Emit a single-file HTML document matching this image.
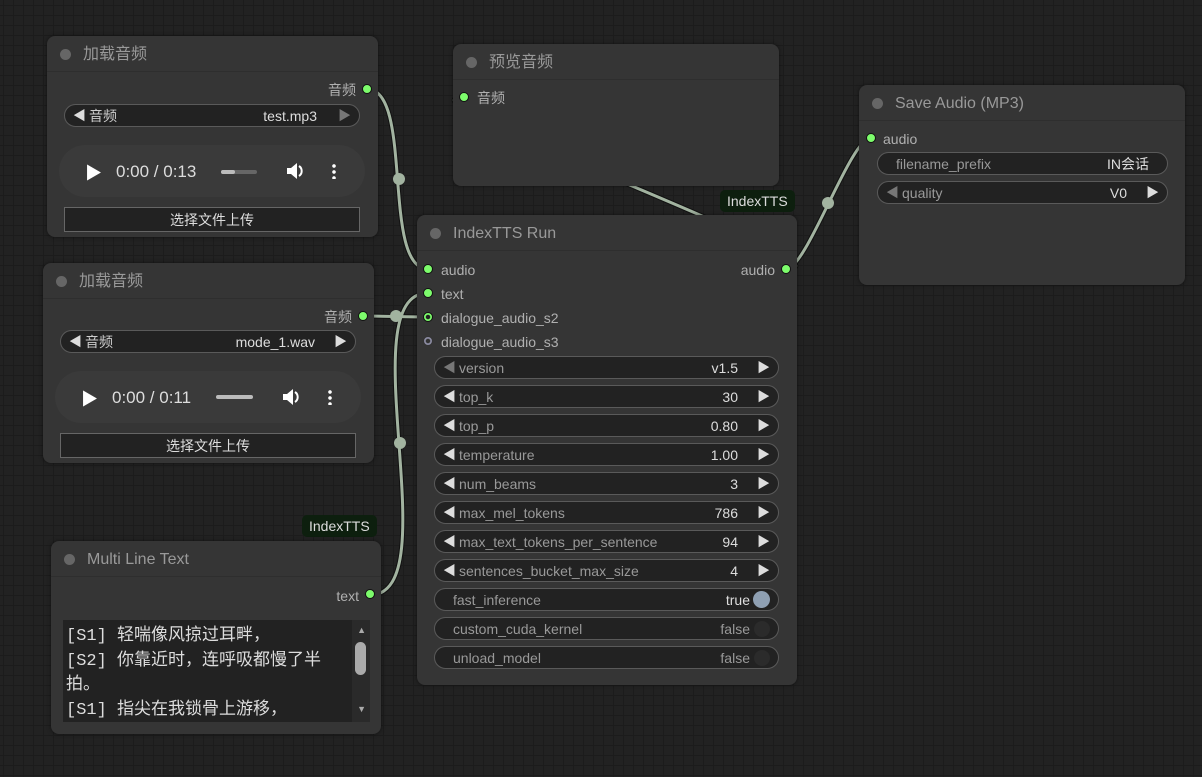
<!DOCTYPE html>
<html><head><meta charset="utf-8"><style>
*{box-sizing:border-box;margin:0;padding:0}
body{width:1202px;height:777px;overflow:hidden;position:relative;font-family:"Liberation Sans","Noto Sans CJK SC",sans-serif;
background-color:#222;
background-image:linear-gradient(#1c1c1c 1px,transparent 1px),linear-gradient(90deg,#1c1c1c 1px,transparent 1px);
background-size:10px 10px;background-position:3px 5px}
.n{position:absolute;background:#353535;border-radius:8px;box-shadow:0 0 4px rgba(0,0,0,.5)}
.t{height:36px;border-bottom:1px solid #2e2e2e;color:#999;font-size:16px;line-height:38px;padding-left:36px;position:relative}
.t:before{content:"";position:absolute;left:13px;top:13px;width:11px;height:11px;border-radius:50%;background:#666}
.a{position:absolute;font-size:14px;color:#b0b0b0;line-height:16px;white-space:nowrap}
.d{position:absolute;width:10px;height:10px;border-radius:50%;background:#7dfc6c;border:1px solid #111}
.w{position:absolute;height:23px;border:1px solid #5a5a5a;border-radius:12px;background:#222;font-size:14px;line-height:22px;color:#999}
.w .l{position:absolute;left:24px}
.w .v{position:absolute;right:40px;color:#ddd}
.w .la{position:absolute;left:8px;color:#ddd;font-size:13px}
.w .ra{position:absolute;right:8px;color:#ddd;font-size:13px}
.p{position:absolute;background:#3a3a3a;border-radius:26px;height:52px}
.p .tm{position:absolute;left:57px;top:17px;color:#ddd;font-size:17px}
.b{position:absolute;height:25px;border:1px solid #666;background:#222;color:#ddd;font-size:14px;text-align:center;line-height:24px}
.badge{position:absolute;background:#0d1f0e;color:#ddd;font-size:14px;line-height:22px;padding:0 7px;border-radius:5px;height:22px}
.tg{position:absolute;right:8px;top:3px;width:16px;height:16px;border-radius:50%;background:#2b2b2b}
</style></head><body>
<svg width="1202" height="777" style="position:absolute;left:0;top:0">
<g fill="none" stroke-linecap="round">
<g stroke="#111" stroke-width="5">
<path d="M367 89 C414 89 381 269 428 269"/>
<path d="M363 316 C380 316 411 317 428 317"/>
<path d="M370 595 C450 595 348 293 428 293"/>
<path d="M786 269 C807 269 850 138 871 138"/>
<path d="M786 269 C870 269 380 97 464 97"/>
</g>
<g stroke="#a2b3a0" stroke-width="3">
<path d="M367 89 C414 89 381 269 428 269"/>
<path d="M363 316 C380 316 411 317 428 317"/>
<path d="M370 595 C450 595 348 293 428 293"/>
<path d="M786 269 C807 269 850 138 871 138"/>
<path d="M786 269 C870 269 380 97 464 97"/>
</g></g>
<g fill="#a2b3a0"><circle cx="399" cy="179" r="6"/><circle cx="396" cy="316" r="6"/><circle cx="400" cy="443" r="6"/><circle cx="828" cy="203" r="6"/></g>
</svg>

<!-- Load audio A -->
<div class="n" style="left:47px;top:36px;width:331px;height:201px">
<div class="t">加载音频</div>
<div class="a" style="right:22px;top:46px">音频</div><div class="d" style="left:315px;top:48px"></div>
<div class="w" style="left:17px;top:68px;width:296px"><span class="la">◀</span><span class="l" style="left:24px;color:#ccc">音频</span><span class="v" style="right:42px">test.mp3</span><span class="ra" style="color:#777">▶</span></div>
<div class="p" style="left:12px;top:109px;width:306px"><span style="position:absolute;left:26px;top:14px;color:#fff;font-size:17px">▶</span><span class="tm">0:00 / 0:13</span>
<div style="position:absolute;left:162px;top:25px;width:36px;height:4px;border-radius:2px;background:#666"><div style="width:14px;height:4px;background:#bbb;border-radius:2px"></div></div>
<svg style="position:absolute;left:227px;top:17px" width="20" height="18"><path d="M1 6h4l6-5v16l-6-5H1z" fill="#fff"/><path d="M13 4a6 6 0 0 1 0 10" stroke="#fff" stroke-width="2" fill="none"/></svg>
<div style="position:absolute;left:273px;top:18px;width:4px;height:16px;background:radial-gradient(circle,#fff 1.6px,transparent 2px) 0 0/4px 6px"></div></div>
<div class="b" style="left:17px;top:171px;width:296px">选择文件上传</div>
</div>

<!-- Load audio B -->
<div class="n" style="left:43px;top:263px;width:331px;height:200px">
<div class="t">加载音频</div>
<div class="a" style="right:22px;top:46px">音频</div><div class="d" style="left:315px;top:48px"></div>
<div class="w" style="left:17px;top:67px;width:296px"><span class="la">◀</span><span class="l" style="color:#ccc">音频</span><span class="v">mode_1.wav</span><span class="ra">▶</span></div>
<div class="p" style="left:12px;top:108px;width:306px"><span style="position:absolute;left:26px;top:14px;color:#fff;font-size:17px">▶</span><span class="tm">0:00 / 0:11</span>
<div style="position:absolute;left:161px;top:24px;width:37px;height:4px;border-radius:2px;background:#bbb"></div>
<svg style="position:absolute;left:227px;top:17px" width="20" height="18"><path d="M1 6h4l6-5v16l-6-5H1z" fill="#fff"/><path d="M13 4a6 6 0 0 1 0 10" stroke="#fff" stroke-width="2" fill="none"/></svg>
<div style="position:absolute;left:273px;top:18px;width:4px;height:16px;background:radial-gradient(circle,#fff 1.6px,transparent 2px) 0 0/4px 6px"></div></div>
<div class="b" style="left:17px;top:170px;width:296px">选择文件上传</div>
</div>

<!-- Preview -->
<div class="n" style="left:453px;top:44px;width:326px;height:142px">
<div class="t">预览音频</div>
<div class="d" style="left:6px;top:48px"></div><div class="a" style="left:24px;top:46px">音频</div>
</div>

<div class="badge" style="left:720px;top:190px">IndexTTS</div>
<div class="badge" style="left:302px;top:515px">IndexTTS</div>

<!-- IndexTTS Run -->
<div class="n" style="left:417px;top:215px;width:380px;height:470px">
<div class="t">IndexTTS Run</div>
<div class="d" style="left:6px;top:49px"></div><div class="a" style="left:24px;top:47px">audio</div>
<div class="a" style="right:22px;top:47px">audio</div><div class="d" style="left:364px;top:49px"></div>
<div class="d" style="left:6px;top:73px"></div><div class="a" style="left:24px;top:71px">text</div>
<div class="d" style="left:6px;top:97px;background:radial-gradient(#222 2px,#7dfc6c 2.5px)"></div><div class="a" style="left:24px;top:95px">dialogue_audio_s2</div>
<div class="d" style="left:6px;top:121px;background:radial-gradient(#333 2px,#8a8aa0 2.5px);border-color:#333"></div><div class="a" style="left:24px;top:119px">dialogue_audio_s3</div>
<div class="w" style="left:17px;top:141px;width:345px"><span class="la" style="color:#777">◀</span><span class="l">version</span><span class="v">v1.5</span><span class="ra">▶</span></div>
<div class="w" style="left:17px;top:170px;width:345px"><span class="la">◀</span><span class="l">top_k</span><span class="v">30</span><span class="ra">▶</span></div>
<div class="w" style="left:17px;top:199px;width:345px"><span class="la">◀</span><span class="l">top_p</span><span class="v">0.80</span><span class="ra">▶</span></div>
<div class="w" style="left:17px;top:228px;width:345px"><span class="la">◀</span><span class="l">temperature</span><span class="v">1.00</span><span class="ra">▶</span></div>
<div class="w" style="left:17px;top:257px;width:345px"><span class="la">◀</span><span class="l">num_beams</span><span class="v">3</span><span class="ra">▶</span></div>
<div class="w" style="left:17px;top:286px;width:345px"><span class="la">◀</span><span class="l">max_mel_tokens</span><span class="v">786</span><span class="ra">▶</span></div>
<div class="w" style="left:17px;top:315px;width:345px"><span class="la">◀</span><span class="l">max_text_tokens_per_sentence</span><span class="v">94</span><span class="ra">▶</span></div>
<div class="w" style="left:17px;top:344px;width:345px"><span class="la">◀</span><span class="l">sentences_bucket_max_size</span><span class="v">4</span><span class="ra">▶</span></div>
<div class="w" style="left:17px;top:373px;width:345px"><span class="l" style="left:18px">fast_inference</span><span class="v" style="right:28px">true</span><span class="tg" style="background:#8fa0b3;top:2px;right:8px;width:17px;height:17px"></span></div>
<div class="w" style="left:17px;top:402px;width:345px"><span class="l" style="left:18px">custom_cuda_kernel</span><span class="v" style="right:28px;color:#999">false</span><span class="tg"></span></div>
<div class="w" style="left:17px;top:431px;width:345px"><span class="l" style="left:18px">unload_model</span><span class="v" style="right:28px;color:#999">false</span><span class="tg"></span></div>
</div>

<!-- Save Audio -->
<div class="n" style="left:859px;top:85px;width:326px;height:200px">
<div class="t">Save Audio (MP3)</div>
<div class="d" style="left:7px;top:48px"></div><div class="a" style="left:24px;top:46px">audio</div>
<div class="w" style="left:18px;top:67px;width:291px"><span class="l" style="left:18px">filename_prefix</span><span class="v" style="right:18px">IN会话</span></div>
<div class="w" style="left:18px;top:96px;width:291px"><span class="la" style="color:#777">◀</span><span class="l">quality</span><span class="v">V0</span><span class="ra">▶</span></div>
</div>

<!-- Multi line -->
<div class="n" style="left:51px;top:541px;width:330px;height:193px">
<div class="t">Multi Line Text</div>
<div class="a" style="right:22px;top:47px">text</div><div class="d" style="left:314px;top:48px"></div>
<div style="position:absolute;left:12px;top:79px;width:307px;height:102px;background:#222;overflow:hidden">
<div style="position:absolute;left:3px;top:5px;font-family:'Liberation Mono','Noto Sans CJK SC',monospace;font-size:17px;line-height:24.5px;color:#ddd;width:285px">[S1] 轻喘像风掠过耳畔，<br>[S2] 你靠近时，连呼吸都慢了半<br>拍。<br>[S1] 指尖在我锁骨上游移，</div>
<div style="position:absolute;right:0;top:0;width:18px;height:102px;background:#2a2a2a"></div>
<div style="position:absolute;right:4px;top:22px;width:11px;height:33px;border-radius:6px;background:#aaa"></div>
<div style="position:absolute;right:4px;top:5px;color:#aaa;font-size:9px">▲</div>
<div style="position:absolute;right:4px;top:84px;color:#aaa;font-size:9px">▼</div>
</div>
</div>
</body></html>
